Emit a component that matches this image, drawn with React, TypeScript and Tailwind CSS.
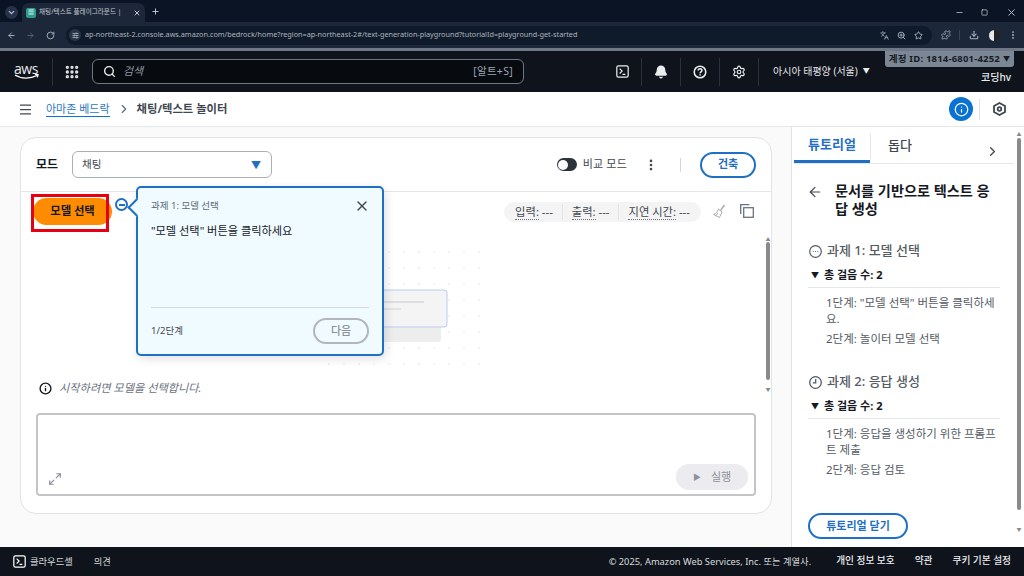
import {
  ArrowLeft,
  ArrowRight,
  Bell,
  ChevronDown,
  ChevronRight,
  Download,
  EllipsisVertical,
  Grip,
  Info,
  Languages,
  Maximize2,
  Menu,
  Minus,
  Plus,
  Puzzle,
  RotateCw,
  Search,
  Settings,
  SlidersHorizontal,
  Square,
  Star,
  X,
  ZoomIn,
} from "lucide-react";

const font = "font-['Noto_Sans','Noto_Sans_CJK_KR',sans-serif]";

const TerminalIcon = ({ size = 16 }: { size?: number }) => (
  <svg width={size} height={size} viewBox="0 0 16 16" fill="none" stroke="currentColor" strokeWidth="1.5">
    <rect x="1" y="1" width="14" height="14" rx="2" />
    <path d="M4.5 4.5 7.5 7.5 4.5 10.5M8 11.5h3.5" />
  </svg>
);

const HelpIcon = () => (
  <svg width="14" height="14" viewBox="0 0 16 16" fill="none" stroke="currentColor" strokeWidth="1.8">
    <circle cx="8" cy="8" r="6.6" />
    <path d="M5.9 6.3c0-2.7 4.3-2.7 4.3-.1 0 1.6-2.1 1.6-2.1 3.2M8.1 10.6v1.4" />
  </svg>
);

function BrowserBar() {
  return (
    <>
      <div className="flex h-[22px] items-end bg-[#0b1424] text-[#c3c9d2]">
        <div className="mb-[3px] ml-[5px] flex h-[13px] w-[13px] items-center justify-center rounded-full bg-[#26334a]">
          <ChevronDown size={9} strokeWidth={3} />
        </div>
        <div className="ml-[4px] flex h-[19px] w-[123px] items-center rounded-t-[7px] bg-[#1c2839] pl-[4px]">
          <div className="flex h-[10px] w-[10px] items-center justify-center rounded-[2px] bg-[#2a9d8f] text-[6px] text-white">
            ▦
          </div>
          <span className="ml-[3px] w-[88px] whitespace-nowrap text-[6.6px] leading-none">채팅/텍스트 플레이그라운드 |</span>
          <X size={8} strokeWidth={3} className="ml-[6px]" />
        </div>
        <Plus size={9} strokeWidth={2.5} className="mb-[6px] ml-[6px]" />
        <div className="ml-auto mb-[2px] flex h-[16px] items-center">
          <Minus size={9} className="mr-[17px]" />
          <Square size={7} strokeWidth={2.5} className="mr-[18px]" />
          <X size={11} className="mr-[7px]" />
        </div>
      </div>
      <div className="flex h-[26px] items-center bg-[#1c2839] text-[#a9b1bd]">
        <ArrowLeft size={9} strokeWidth={2.5} className="ml-[7px]" />
        <ArrowRight size={9} strokeWidth={2.5} className="ml-[10px] text-[#58626f]" />
        <RotateCw size={9} strokeWidth={2.5} className="ml-[11px]" />
        <div className="ml-[11px] flex h-[19px] w-[866px] items-center rounded-full bg-[#0f1a2a] pl-[3px]">
          <div className="flex h-[12px] w-[12px] items-center justify-center rounded-full bg-[#2a3547]">
            <SlidersHorizontal size={7} strokeWidth={3} />
          </div>
          <span className="ml-[4px] text-[7.25px] leading-none text-[#aeb5bf]">
            ap-northeast-2.console.aws.amazon.com/bedrock/home?region=ap-northeast-2#/text-generation-playground?tutorialId=playground-get-started
          </span>
          <Languages size={9} className="ml-auto" />
          <ZoomIn size={9} strokeWidth={2.5} className="ml-[8px]" />
          <Star size={9} strokeWidth={2.5} className="ml-[8px] mr-[9px]" />
        </div>
        <Puzzle size={10} className="ml-[9px]" />
        <div className="ml-[8px] h-[10px] w-px bg-[#3a4557]" />
        <Download size={10} strokeWidth={2.5} className="ml-[9px]" />
        <div className="ml-[10px] h-[11px] w-[11px] rounded-full bg-[linear-gradient(90deg,#e8e8e8_50%,#222_50%)]" />
        <EllipsisVertical size={10} strokeWidth={2.5} className="ml-[8px]" />
      </div>
      <div className="h-[3px] bg-[#6d7786]" />
    </>
  );
}

function NavIcon({ children }: { children: React.ReactNode }) {
  return <div className="flex h-[28px] w-[39px] items-center justify-center border-r border-[#2a323d]">{children}</div>;
}

function AwsNav() {
  return (
    <div className="relative flex h-[41px] items-center bg-[#0f141c] text-[#eaedf0]">
      <div className="ml-[14px] flex w-[24px] flex-col items-center">
        <span className="font-['Open_Sans',sans-serif] text-[14px] leading-[11px] tracking-[-0.5px]">aws</span>
        <svg width="25" height="6" viewBox="0 0 25 6" fill="none" stroke="#fff" strokeWidth="1.3">
          <path d="M1 1c6 4 15 4 22 .5" />
          <path d="M21 .7h3l-.7 2.7" />
        </svg>
      </div>
      <div className="ml-[14px] h-[28px] w-px bg-[#2a323d]" />
      <Grip size={16} strokeWidth={3} className="ml-[11px]" />
      <div className="ml-[12px] flex h-[25px] w-[432px] items-center rounded-[6px] border-[1.5px] border-[#6f7680] bg-[#070a0f] px-[10px]">
        <Search size={13} strokeWidth={2.5} />
        <span className="ml-[7px] text-[11px] italic text-[#8d95a0]">검색</span>
        <span className="ml-auto text-[10.5px] tracking-[0.3px] text-[#9ba3ad]">[알트+S]</span>
      </div>
      <div className="ml-[79px] flex items-center">
        <NavIcon>
          <TerminalIcon size={13} />
        </NavIcon>
        <NavIcon>
          <Bell size={14} strokeWidth={2.5} fill="currentColor" />
        </NavIcon>
        <NavIcon>
          <HelpIcon />
        </NavIcon>
        <NavIcon>
          <Settings size={14} strokeWidth={2} />
        </NavIcon>
      </div>
      <span className="ml-[14px] text-[10px] text-[#e2e5e9]">아시아 태평양 (서울)</span>
      <span className="ml-[5px] text-[7px]">▼</span>
      <span className="ml-auto mr-[13px] mt-[12px] text-[10px] font-medium">코딩hv</span>
      <div className="absolute right-[10px] top-0 flex h-[16px] w-[129px] items-center justify-center rounded-b-[3px] bg-[#7c8796] text-[9.5px] font-bold tracking-[0.2px] text-[#171c24]">
        계정 ID: 1814-6801-4252 <span className="ml-[3px] text-[7px]">▼</span>
      </div>
    </div>
  );
}

function Breadcrumb() {
  return (
    <div className="flex h-[35px] items-center border-b border-[#e6e7e8] bg-white">
      <Menu size={15} strokeWidth={2} className="ml-[18px] text-[#414750]" />
      <span className="ml-[13px] border-b border-[#0972d3] text-[11px] leading-[15px] text-[#2a78c4]">아마존 베드락</span>
      <ChevronRight size={14} className="ml-[7px] text-[#5f6b7a]" />
      <span className="ml-[6px] text-[11.300px] font-bold text-[#414750]">채팅/텍스트 놀이터</span>
      <div className="ml-auto flex h-[24px] w-[24px] items-center justify-center rounded-full bg-[#0972d3] text-white">
        <Info size={15} strokeWidth={2} />
      </div>
      <div className="ml-[6px] h-[21px] w-px bg-[#e0e2e4]" />
      <svg className="ml-[13px] mr-[18px]" width="13" height="14" viewBox="0 0 13 14" fill="none" stroke="#414750" strokeWidth="1.8">
        <path d="M6.5 1 12 4v6l-5.500 3L1 10V4z" />
        <circle cx="6.500" cy="7" r="1.800" />
      </svg>
    </div>
  );
}

function Illustration() {
  const dots: [number, number][] = [];
  for (let r = 0; r < 8; r++) for (let c = 0; c < 11; c++) dots.push([c * 15 + 8, r * 16 + 8]);
  return (
    <svg width="175" height="130" viewBox="0 0 175 130" className="ml-[300px] mt-[8px]">
      {dots.map(([x, y]) => (
        <circle key={`${x}-${y}`} cx={x} cy={y} r="1" fill="#eceef0" />
      ))}
      <rect x="20" y="62" width="100" height="36" rx="3" fill="#ededee" />
      <rect x="10" y="46" width="116" height="37" rx="3" fill="#f4f4f5" stroke="#b9cdee" />
      <rect x="60" y="57" width="43" height="2" fill="#dcdde0" />
      <rect x="60" y="64" width="20" height="2" fill="#e2e3e5" />
    </svg>
  );
}

function Tour() {
  return (
    <div className="absolute left-[94px] top-[-6px] flex items-start">
      <div className="mt-[12px] flex h-[13px] w-[13px] items-center justify-center rounded-full border-2 border-[#1f6fc4] bg-white">
        <div className="h-[2px] w-[6px] bg-[#1f6fc4]" />
      </div>
      <div className="relative z-10 ml-[8px] flex h-[170px] w-[248px] flex-col rounded-[5px] border-2 border-[#1f6fc4] bg-[#f0fbff] px-[13px] shadow-[2px_3px_10px_rgba(0,0,0,0.12)]">
        <div className="absolute left-[-8px] top-[13px] h-[13px] w-[13px] rotate-45 border-b-2 border-l-2 border-[#1f6fc4] bg-[#f0fbff]" />
        <div className="mt-[10px] flex items-center justify-between">
          <span className="text-[9.5px] text-[#5f6b7a]">과제 1: 모델 선택</span>
          <X size={16} strokeWidth={2} className="mr-[-1px] text-[#414750]" />
        </div>
        <p className="mt-[9px] text-[11.200px] leading-[16px] text-[#16191f]">"모델 선택" 버튼을 클릭하세요</p>
        <div className="mt-auto flex h-[47px] items-center justify-between border-t border-[#d5dbdb]">
          <span className="text-[9.5px] text-[#414750]">1/2단계</span>
          <span className="flex h-[26px] w-[56px] items-center justify-center rounded-full border-2 border-[#b2b5b9] text-[11px] font-medium text-[#8d9199]">
            다음
          </span>
        </div>
      </div>
    </div>
  );
}

function Playground() {
  return (
    <div className="ml-[20px] mt-[10px] flex h-[377px] w-[752px] flex-col rounded-[16px] border border-[#e2e3e5] bg-white">
      <div className="flex h-[54px] shrink-0 items-center border-b border-[#e6e7e8] pl-[15px] pr-[15px]">
        <span className="text-[12px] font-bold text-[#16191f]">모드</span>
        <div className="ml-[14px] flex h-[27px] w-[200px] items-center justify-between rounded-[6px] border border-[#aab0b7] pl-[9px] pr-[10px] text-[#414750]">
          <span className="text-[10.5px]">채팅</span>
          <span className="text-[10px] leading-none text-[#1f6fc4]">▼</span>
        </div>
        <div className="ml-auto flex h-[13px] w-[20px] items-center justify-start rounded-full bg-[#2d333b] pl-[1.500px]">
          <div className="h-[10px] w-[10px] rounded-full bg-white" />
        </div>
        <span className="ml-[6px] text-[11px] tracking-[0.2px] text-[#414750]">비교 모드</span>
        <EllipsisVertical size={14} strokeWidth={2.5} className="ml-[17px] text-[#414750]" />
        <div className="ml-[22px] h-[14px] w-px bg-[#d5d7da]" />
        <span className="ml-[19px] flex h-[26px] w-[56px] items-center justify-center rounded-full border-2 border-[#1f6fc4] text-[11px] font-bold text-[#1f6fc4]">
          건축
        </span>
      </div>
      <div className="relative flex min-h-0 flex-1 flex-col">
        <div className="flex h-[44px] shrink-0 items-start pt-[6px]">
          <span className="ml-[12px] flex h-[27px] w-[79px] items-center justify-center rounded-full bg-[#ff8c00] text-[11.300px] font-bold text-[#16191f]">
            모델 선택
          </span>
          <div className="ml-auto mt-[4px] flex h-[20px] w-[197px] items-center justify-center rounded-full bg-[#f4f4f4] text-[11.300px] text-[#414750]">
            <span>
              <span className="border-b border-dotted border-[#6b7280]">입력:</span> ---
            </span>
            <span className="ml-[9px] border-l border-[#e3e3e3] pl-[9px]">
              <span className="border-b border-dotted border-[#6b7280]">출력:</span> ---
            </span>
            <span className="ml-[9px] border-l border-[#e3e3e3] pl-[9px]">
              <span className="border-b border-dotted border-[#6b7280]">지연 시간:</span> ---
            </span>
          </div>
          <svg className="ml-[11px] mt-[6px]" width="14" height="15" viewBox="0 0 14 15" fill="none" stroke="#a8adb4" strokeWidth="1">
            <path d="M8.500 6.500 12.500 1" strokeWidth="1.400" />
            <path d="M6.500 5 10 8 7.500 13.500 1.500 10.500C3.800 10 5.500 8 6.500 5Z" />
            <path d="M4 11.700 6 9" />
          </svg>
          <svg className="ml-[14px] mr-[17px] mt-[6px]" width="14" height="14" viewBox="0 0 14 14" fill="none" stroke="#6b7280" strokeWidth="1.300">
            <path d="M.7 10V.7H9.500" />
            <rect x="3.700" y="3.700" width="9.600" height="9.600" />
          </svg>
        </div>
        <Illustration />
        <div className="ml-[18px] mt-[5px] flex h-[18px] items-center">
          <Info size={13} strokeWidth={2.5} className="text-[#16191f]" />
          <span className="ml-[7px] text-[11.200px] italic text-[#6b7280]">시작하려면 모델을 선택합니다.</span>
        </div>
        <div className="ml-[15px] mt-[16px] flex h-[83px] w-[720px] items-end justify-between rounded-[4px] border-2 border-[#c3c5c8] pb-[4px] pl-[10px] pr-[6px]">
          <Maximize2 size={14} className="mb-[4px] text-[#8d9199]" />
          <span className="flex h-[26px] w-[72px] items-center justify-center rounded-full bg-[#ebebf0] text-[11px] text-[#8d9199]">
            <span className="mr-[10px] text-[8px]">▶</span>실행
          </span>
        </div>
        <Tour />
        <div className="absolute left-[10px] top-[2px] h-[38px] w-[78px] border-[3px] border-[#e60012]" />
        <div className="absolute right-[1px] top-[44px] flex h-[156px] w-[4px] flex-col items-center">
          <span className="text-[5px] leading-[6px] text-[#8a8a8a]">▲</span>
          <div className="h-[143px] w-[4px] rounded-full bg-[#8a8a8a]" />
          <span className="mt-[6px] text-[5px] leading-[6px] text-[#8a8a8a]">▼</span>
        </div>
      </div>
    </div>
  );
}

function TaskBlock({
  icon,
  title,
  steps,
}: {
  icon: React.ReactNode;
  title: string;
  steps: string[];
}) {
  return (
    <div className="w-[192px]">
      <div className="ml-[1px] flex h-[20px] items-center text-[#545b64]">
        {icon}
        <span className="ml-[5px] text-[13px] font-medium">{title}</span>
      </div>
      <div className="mt-[4px] flex h-[23px] items-center border-b border-[#e6e7e8] pb-[2px] text-[#16191f]">
        <span className="ml-[3px] text-[8px]">▼</span>
        <span className="ml-[5px] text-[11px] font-bold">총 걸음 수: 2</span>
      </div>
      <div className="ml-[18px] mt-[7px] flex w-[170px] flex-col gap-[4px] text-[11.500px] leading-[16px] text-[#545b64]">
        {steps.map((s) => (
          <p key={s} className="break-all">
            {s}
          </p>
        ))}
      </div>
    </div>
  );
}

function TutorialPanel() {
  return (
    <div className="relative flex w-[233px] flex-col border-l border-[#e2e3e5] bg-white">
      <div className="mx-[2px] flex h-[37px] w-[220px] items-end border-b border-[#e6e7e8]">
        <div className="flex h-[37px] w-[76px] items-center justify-center border-b-[3px] border-[#1f6fc4] pt-[4px] text-[13px] font-bold text-[#1f6fc4]">
          튜토리얼
        </div>
        <div className="mb-[4px] h-[26px] w-px bg-[#e6e7e8]" />
        <div className="flex h-[37px] w-[42px] items-center whitespace-nowrap pl-[17px] pt-[3px] text-[13px] font-medium text-[#414750]">
          돕다
        </div>
        <ChevronRight size={15} strokeWidth={2} className="mb-[4px] ml-[72px] text-[#414750]" />
      </div>
      <div className="flex flex-col px-[16px]">
        <div className="mt-[18px] flex">
          <ArrowLeft size={16} strokeWidth={1.800} className="ml-[-1px] mt-[2px] text-[#414750]" />
          <h2 className="ml-[12px] w-[160px] text-[14.200px] font-bold leading-[18px] text-[#16191f]">
            문서를 기반으로 텍스트 응답 생성
          </h2>
        </div>
        <div className="mt-[23px]">
          <TaskBlock
            icon={
              <svg width="13" height="13" viewBox="0 0 13 13" fill="none" stroke="currentColor" strokeWidth="1.200">
                <circle cx="6.500" cy="6.500" r="5.800" />
                <path d="M3.800 6.500h.8M6.100 6.500h.8M8.400 6.500h.8" />
              </svg>
            }
            title="과제 1: 모델 선택"
            steps={['1단계: "모델 선택" 버튼을 클릭하세요.', "2단계: 놀이터 모델 선택"]}
          />
        </div>
        <div className="mt-[25px]">
          <TaskBlock
            icon={
              <svg width="13" height="13" viewBox="0 0 13 13" fill="none" stroke="currentColor" strokeWidth="1.300">
                <circle cx="6.500" cy="6.500" r="5.800" />
                <path d="M6.700 3v3.800H3.800" />
              </svg>
            }
            title="과제 2: 응답 생성"
            steps={["1단계: 응답을 생성하기 위한 프롬프트 제출", "2단계: 응답 검토"]}
          />
        </div>
        <span className="mt-[35px] flex h-[26px] w-[100px] items-center justify-center rounded-full border-2 border-[#1f6fc4] text-[11px] font-bold text-[#1f6fc4]">
          튜토리얼 닫기
        </span>
      </div>
      <div className="absolute right-[3px] top-[4px] flex w-[4px] flex-col items-center">
        <span className="text-[5px] leading-[6px] text-[#8a8a8a]">▲</span>
        <div className="mt-[1px] h-[372px] w-[4px] rounded-full bg-[#8a8a8a]" />
        <span className="mt-[16px] text-[5px] leading-[6px] text-[#8a8a8a]">▼</span>
      </div>
    </div>
  );
}

function Footer() {
  return (
    <div className="flex h-[29px] items-center bg-[#0f141c] text-[9.300px] text-[#d5dbdb]">
      <span className="ml-[13px] text-white">
        <TerminalIcon size={13} />
      </span>
      <span className="ml-[4px]">클라우드셸</span>
      <span className="ml-[21px]">의견</span>
      <span className="ml-auto">© 2025, Amazon Web Services, Inc. 또는 계열사.</span>
      <span className="ml-[25px] text-[9.700px] font-medium text-[#eaedf0]">개인 정보 보호</span>
      <span className="ml-[20px] text-[9.700px] font-medium text-[#eaedf0]">약관</span>
      <span className="ml-[20px] mr-[13px] text-[9.700px] font-medium text-[#eaedf0]">쿠키 기본 설정</span>
    </div>
  );
}

export default function App() {
  return (
    <div className={`flex h-[576px] w-[1024px] flex-col overflow-hidden bg-white ${font}`}>
      <BrowserBar />
      <AwsNav />
      <Breadcrumb />
      <div className="flex h-[420px]">
        <div className="w-[791px] bg-[#fafafa]">
          <Playground />
        </div>
        <TutorialPanel />
      </div>
      <Footer />
    </div>
  );
}
